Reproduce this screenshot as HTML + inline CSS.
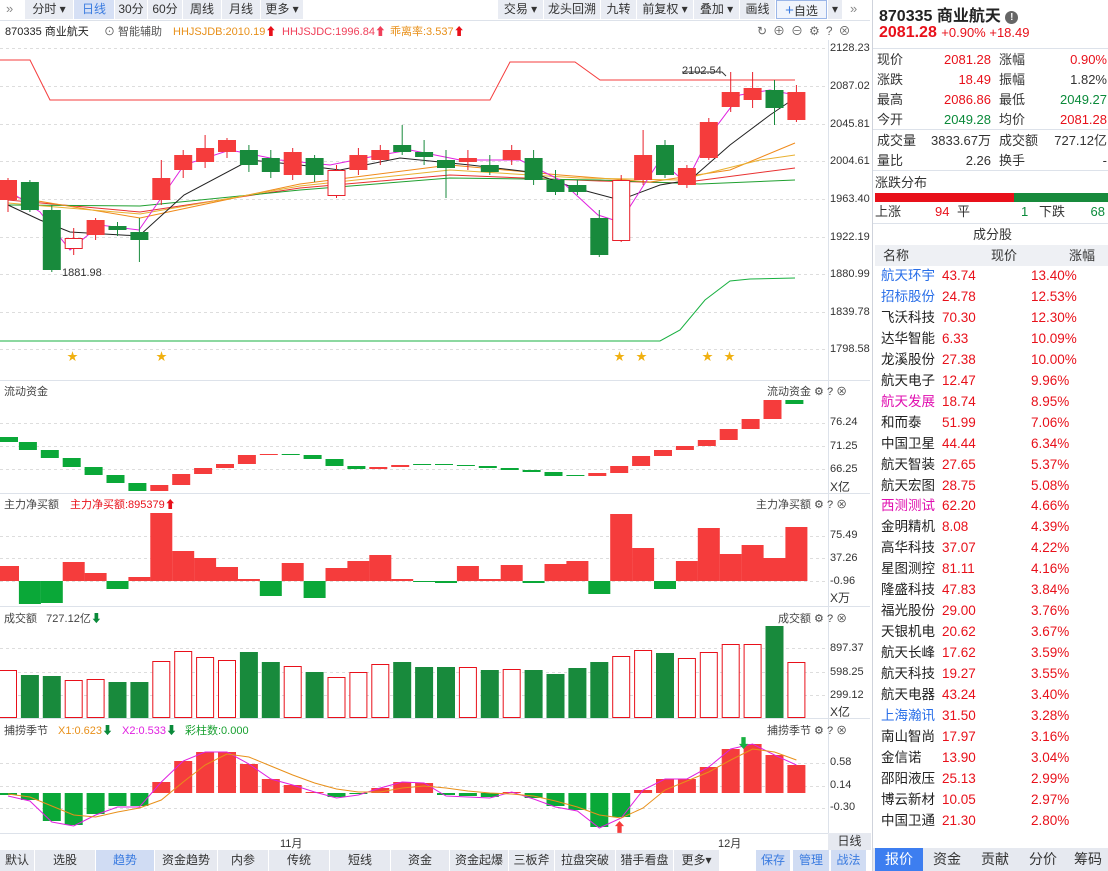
<!DOCTYPE html>
<html><head><meta charset="utf-8">
<style>
*{margin:0;padding:0;box-sizing:border-box}
body{width:1108px;height:871px;overflow:hidden;background:#fff;font-family:"Liberation Sans","Noto Sans CJK SC",sans-serif;font-size:12px;color:#333;position:relative}
.a{position:absolute;white-space:nowrap}
.tb{position:absolute;top:0;height:19px;background:#e9ecf3;font-size:12px;line-height:19px;text-align:center;color:#333}
.rp{position:absolute;left:872px;top:0;width:236px;height:871px;border-left:1px solid #cfd3dc}
.row{position:absolute;left:4px;width:232px;height:20px;font-size:13px;line-height:20px}
.r{color:#e8101a}.g{color:#0a8a3a}
.bt{position:absolute;top:850px;height:21px;line-height:21px;background:#e6e9f0;text-align:center;font-size:12px;color:#333}
.ax{position:absolute;left:830px;font-size:11px;color:#333}
</style></head><body>
<div class="a" style="left:6px;top:1px;color:#888;font-size:13px">»</div>
<div class="tb" style="left:25px;width:48px">分时 ▾</div>
<div class="tb" style="left:74px;width:40px;background:#d6e0f5;color:#3a7be0">日线</div>
<div class="tb" style="left:115px;width:32px">30分</div>
<div class="tb" style="left:148px;width:34px">60分</div>
<div class="tb" style="left:183px;width:38px">周线</div>
<div class="tb" style="left:222px;width:38px">月线</div>
<div class="tb" style="left:261px;width:42px">更多 ▾</div>
<div class="tb" style="left:498px;width:45px">交易 ▾</div>
<div class="tb" style="left:544px;width:56px">龙头回溯</div>
<div class="tb" style="left:601px;width:35px">九转</div>
<div class="tb" style="left:637px;width:56px">前复权 ▾</div>
<div class="tb" style="left:694px;width:45px">叠加 ▾</div>
<div class="tb" style="left:740px;width:35px">画线</div>
<div class="tb" style="left:776px;width:51px;border:1px solid #9bb6e8;background:#f0f4fc"><span style="color:#3a7be0;font-size:15px">+</span>自选</div>
<div class="tb" style="left:828px;width:14px">▾</div>
<div class="a" style="left:850px;top:1px;color:#888;font-size:13px">»</div>
<div class="a" style="left:0;top:20px;width:870px;height:1px;background:#dde2ea"></div>
<div class="a" style="left:5px;top:23px;font-size:11px;color:#222">870335 商业航天</div>
<div class="a" style="left:104px;top:23px;font-size:11px;color:#555">⊙ 智能辅助</div>
<div class="a" style="left:173px;top:23px;font-size:11px;color:#e8901a">HHJSJDB:2010.19<span class="r">⬆</span></div>
<div class="a" style="left:282px;top:23px;font-size:11px;color:#f0405a">HHJSJDC:1996.84⬆</div>
<div class="a" style="left:390px;top:23px;font-size:11px;color:#e8901a">乖离率:3.537<span class="r">⬆</span></div>
<div class="a" style="left:757px;top:22px;font-size:12px;color:#666;letter-spacing:6px">↻⊕⊖⚙?⊗</div>

<svg id="ch" class="a" style="left:0;top:0" width="870" height="850"></svg>

<div class="ax" style="top:42px">2128.23</div>
<div class="ax" style="top:80px">2087.02</div>
<div class="ax" style="top:118px">2045.81</div>
<div class="ax" style="top:155px">2004.61</div>
<div class="ax" style="top:193px">1963.40</div>
<div class="ax" style="top:231px">1922.19</div>
<div class="ax" style="top:268px">1880.99</div>
<div class="ax" style="top:306px">1839.78</div>
<div class="ax" style="top:343px">1798.58</div>
<div class="a" style="left:682px;top:65px;font-size:11px">2102.54</div>
<div class="a" style="left:62px;top:267px;font-size:11px">1881.98</div>

<div class="a" style="left:4px;top:383px;font-size:11px;color:#444">流动资金</div>
<div class="a" style="left:767px;top:383px;font-size:11px;color:#444">流动资金 ⚙ ? ⊗</div>
<div class="ax" style="top:416px">76.24</div>
<div class="ax" style="top:440px">71.25</div>
<div class="ax" style="top:463px">66.25</div>
<div class="ax" style="top:478px;font-size:12px">X亿</div>

<div class="a" style="left:4px;top:496px;font-size:11px;color:#444">主力净买额</div>
<div class="a" style="left:70px;top:496px;font-size:11px;color:#e8101a">主力净买额:895379⬆</div>
<div class="a" style="left:756px;top:496px;font-size:11px;color:#444">主力净买额 ⚙ ? ⊗</div>
<div class="ax" style="top:529px">75.49</div>
<div class="ax" style="top:552px">37.26</div>
<div class="ax" style="top:575px">-0.96</div>
<div class="ax" style="top:589px;font-size:12px">X万</div>

<div class="a" style="left:4px;top:610px;font-size:11px;color:#444">成交额 &nbsp; 727.12亿<span class="g">⬇</span></div>
<div class="a" style="left:778px;top:610px;font-size:11px;color:#444">成交额 ⚙ ? ⊗</div>
<div class="ax" style="top:642px">897.37</div>
<div class="ax" style="top:666px">598.25</div>
<div class="ax" style="top:689px">299.12</div>
<div class="ax" style="top:703px;font-size:12px">X亿</div>

<div class="a" style="left:4px;top:722px;font-size:11px;color:#444">捕捞季节</div>
<div class="a" style="left:58px;top:722px;font-size:11px;color:#e8901a">X1:0.623<span class="g">⬇</span></div>
<div class="a" style="left:122px;top:722px;font-size:11px;color:#e020e0">X2:0.533<span class="g">⬇</span></div>
<div class="a" style="left:185px;top:722px;font-size:11px;color:#18a030">彩柱数:0.000</div>
<div class="a" style="left:767px;top:722px;font-size:11px;color:#444">捕捞季节 ⚙ ? ⊗</div>
<div class="ax" style="top:756px">0.58</div>
<div class="ax" style="top:779px">0.14</div>
<div class="ax" style="top:801px">-0.30</div>

<div class="a" style="left:0;top:833px;width:828px;height:1px;background:#dde2ea"></div>
<div class="a" style="left:280px;top:835px;font-size:11px">11月</div>
<div class="a" style="left:718px;top:835px;font-size:11px">12月</div>
<div class="a" style="left:828px;top:833px;width:43px;height:17px;background:#e6e9f0;text-align:center;font-size:12px;line-height:17px">日线</div>

<div class="bt" style="left:0;width:34px">默认</div>
<div class="bt" style="left:35px;width:60px">选股</div>
<div class="bt" style="left:96px;width:58px;background:#d0dcf3;color:#3a7be0">趋势</div>
<div class="bt" style="left:155px;width:62px">资金趋势</div>
<div class="bt" style="left:218px;width:50px">内参</div>
<div class="bt" style="left:269px;width:60px">传统</div>
<div class="bt" style="left:330px;width:60px">短线</div>
<div class="bt" style="left:391px;width:58px">资金</div>
<div class="bt" style="left:450px;width:58px">资金起爆</div>
<div class="bt" style="left:509px;width:45px">三板斧</div>
<div class="bt" style="left:555px;width:60px">拉盘突破</div>
<div class="bt" style="left:616px;width:57px">猎手看盘</div>
<div class="bt" style="left:674px;width:45px">更多▾</div>
<div class="bt" style="left:756px;width:34px;background:#d0dcf3;color:#3a7be0">保存</div>
<div class="bt" style="left:793px;width:36px;background:#d0dcf3;color:#3a7be0">管理</div>
<div class="bt" style="left:831px;width:35px;background:#d0dcf3;color:#3a7be0">战法</div>

<div class="rp">
<div class="a" style="left:6px;top:2px;font-size:16px;font-weight:bold;color:#222">870335 商业航天 <span style="display:inline-block;width:13px;height:13px;border-radius:50%;background:#666;color:#fff;font-size:10px;text-align:center;line-height:13px;vertical-align:1px">!</span></div>
<div class="a" style="left:6px;top:24px;font-size:16px;font-weight:bold;color:#e8101a">2081.28 <span style="font-size:13px;font-weight:normal">+0.90% +18.49</span></div>
<div class="a" style="left:0;top:48px;width:236px;height:1px;background:#dde2ea"></div>
<div class="row" style="top:50px">现价<span class="a r" style="right:118px">2081.28</span><span class="a" style="left:122px">涨幅</span><span class="a r" style="right:2px">0.90%</span></div>
<div class="row" style="top:70px">涨跌<span class="a r" style="right:118px">18.49</span><span class="a" style="left:122px">振幅</span><span class="a" style="right:2px">1.82%</span></div>
<div class="row" style="top:90px">最高<span class="a r" style="right:118px">2086.86</span><span class="a" style="left:122px">最低</span><span class="a g" style="right:2px">2049.27</span></div>
<div class="row" style="top:110px">今开<span class="a g" style="right:118px">2049.28</span><span class="a" style="left:122px">均价</span><span class="a r" style="right:2px">2081.28</span></div>
<div class="a" style="left:0;top:129px;width:236px;height:1px;background:#dde2ea"></div>
<div class="row" style="top:131px">成交量<span class="a" style="right:118px">3833.67万</span><span class="a" style="left:122px">成交额</span><span class="a" style="right:2px">727.12亿</span></div>
<div class="row" style="top:151px">量比<span class="a" style="right:118px">2.26</span><span class="a" style="left:122px">换手</span><span class="a" style="right:2px">-</span></div>
<div class="a" style="left:0;top:170px;width:236px;height:1px;background:#dde2ea"></div>
<div class="row" style="top:173px;left:2px">涨跌分布</div>
<div class="a" style="left:2px;top:193px;width:139px;height:9px;background:#e8101a"></div>
<div class="a" style="left:141px;top:193px;width:95px;height:9px;background:#188a3c"></div>
<div class="row" style="top:202px;left:2px">上涨<span class="a r" style="left:60px">94</span><span class="a" style="left:82px">平</span><span class="a g" style="left:146px">1</span><span class="a" style="left:164px">下跌</span><span class="a g" style="right:2px">68</span></div>
<div class="a" style="left:0;top:223px;width:236px;height:1px;background:#dde2ea"></div>
<div class="a" style="left:100px;top:225px;font-size:13px;line-height:20px">成分股</div>
<div class="a" style="left:2px;top:245px;width:234px;height:21px;background:#eef0f4;font-size:13px;line-height:21px"><span class="a" style="left:8px">名称</span><span class="a" style="left:116px">现价</span><span class="a" style="left:194px">涨幅</span></div>
<div id="list"></div>
<div class="a" style="left:0;top:848px;width:236px;height:23px;background:#e6e9f0"></div>
<div class="a" style="left:2px;top:848px;width:48px;height:23px;background:#3d7ef0;color:#fff;font-size:14px;text-align:center;line-height:23px">报价</div>
<div class="a" style="left:50px;top:848px;width:48px;font-size:14px;text-align:center;line-height:23px">资金</div>
<div class="a" style="left:98px;top:848px;width:48px;font-size:14px;text-align:center;line-height:23px">贡献</div>
<div class="a" style="left:146px;top:848px;width:48px;font-size:14px;text-align:center;line-height:23px">分价</div>
<div class="a" style="left:194px;top:848px;width:42px;font-size:14px;text-align:center;line-height:23px">筹码</div>
</div>

<script>
var L=[["航天环宇","43.74","13.40%","#2a6fe8"],["招标股份","24.78","12.53%","#2a6fe8"],["飞沃科技","70.30","12.30%"],["达华智能","6.33","10.09%"],["龙溪股份","27.38","10.00%"],["航天电子","12.47","9.96%"],["航天发展","18.74","8.95%","#e010b0"],["和而泰","51.99","7.06%"],["中国卫星","44.44","6.34%"],["航天智装","27.65","5.37%"],["航天宏图","28.75","5.08%"],["西测测试","62.20","4.66%","#e010b0"],["金明精机","8.08","4.39%"],["高华科技","37.07","4.22%"],["星图测控","81.11","4.16%"],["隆盛科技","47.83","3.84%"],["福光股份","29.00","3.76%"],["天银机电","20.62","3.67%"],["航天长峰","17.62","3.59%"],["航天科技","19.27","3.55%"],["航天电器","43.24","3.40%"],["上海瀚讯","31.50","3.28%","#2a6fe8"],["南山智尚","17.97","3.16%"],["金信诺","13.90","3.04%"],["邵阳液压","25.13","2.99%"],["博云新材","10.05","2.97%"],["中国卫通","21.30","2.80%"]];
var h="";L.forEach(function(r,i){var y=266+i*20.95;h+='<div class="row" style="top:'+y+'px;left:8px;font-size:13.5px"><span style="color:'+(r[3]||"#222")+'">'+r[0]+'</span><span class="a r" style="left:61px">'+r[1]+'</span><span class="a r" style="left:150px">'+r[2]+'</span></div>';});
document.getElementById("list").innerHTML=h;

var s="",R="#f53c3c",G="#0aa838",GV="#188a3c";
function X(i){return 8+21.9*i}
function rect(x,y,w,hh,f,st){if(hh<1)hh=1;s+='<rect x="'+x+'" y="'+y+'" width="'+w+'" height="'+hh+'" fill="'+f+'"'+(st?' stroke="'+st+'"':'')+'/>'}
function line(x1,y1,x2,y2,c,d){s+='<line x1="'+x1+'" y1="'+y1+'" x2="'+x2+'" y2="'+y2+'" stroke="'+c+'"'+(d?' stroke-dasharray="3,3"':'')+'/>'}
function poly(p,c,w){s+='<polyline fill="none" stroke="'+c+'" stroke-width="'+(w||1)+'" points="'+p+'"/>'}
[48,86,124,161,199,237,274,312,349,423,446,469,536,558,581,648,672,695,763,786,808].forEach(function(y){line(0,y+0.5,828,y+0.5,"#ddd",1)});
[380,493,606,718].forEach(function(y){line(0,y+0.5,870,y+0.5,"#dde2ea")});
line(828.5,40,828.5,850,"#dde2ea");
poly("0,60 30,60 50,100 490,100 510,62 575,62 600,80 795,80",R);
poly("0,341 660,341 680,330 705,300 730,281 750,279 795,278","#18b040");
poly("8,200 140,212 300,188 450,175 600,181 680,183 795,168","#e83030");
poly("8,205 140,206 300,190 450,178 600,180 700,184 795,180","#20a030");
poly("8,196 140,218 300,184 450,165 560,175 650,182 730,170 795,143","#f08a1a");
poly("8,203 140,214 300,186 450,170 580,178 680,180 760,160 795,155","#e8b030");
poly("8,205 40,220 70,232 139,236 184,195 250,160 300,165 340,170 400,158 470,165 530,172 575,188 620,200 660,185 690,180 730,145 770,115 795,98","#222");
poly("8,190 40,212 70,250 100,225 139,230 184,165 230,150 280,160 330,165 380,155 410,150 460,160 520,160 560,180 598,215 620,222 660,160 686,183 710,135 740,95 770,90 795,95","#e020e0");
poly("682,72 722,72 726,76","#333");
var C=[[200,180,178,212,1],[182,210,180,212,0],[210,270,205,272,0],[248,238,228,255,1],[235,220,218,240,1],[226,230,222,236,0],[232,240,218,262,0],[200,178,160,205,1],[170,155,150,178,1],[162,148,135,168,1],[152,140,138,158,1],[150,165,145,172,0],[158,172,150,178,0],[175,152,148,180,1],[158,175,155,182,0],[195,170,165,198,1],[170,155,148,175,1],[160,150,145,165,1],[145,152,125,155,0],[152,157,140,165,0],[160,168,150,198,0],[162,158,150,170,1],[165,172,155,175,0],[160,150,145,165,1],[158,180,150,185,0],[180,192,170,195,0],[185,192,180,195,0],[218,255,210,257,0],[240,180,175,242,1],[180,155,130,185,1],[145,175,140,178,0],[185,168,165,188,1],[158,122,118,160,1],[107,92,72,112,1],[100,88,72,108,1],[90,108,80,125,0],[120,92,85,122,1]];
C.forEach(function(c,i){var x=X(i),t=Math.min(c[0],c[1]),b=Math.max(c[0],c[1]),col=c[4]?"#e8202a":GV;
line(x,c[2],x,t,col);line(x,b,x,c[3],col);
if(c[4]&&(i==3||i==15||i==28))rect(x-8.5,t+.5,17,b-t,"#fff",col);else rect(x-9,t,18,b-t,c[4]?"#f53c3c":GV);});
[72,161,619,641,707,729].forEach(function(x){s+='<text x="'+(x-5)+'" y="360" font-size="11" fill="#f0b010">★</text>'});
var F=[[437,442,0],[442,450,0],[450,458,0],[458,467,0],[467,475,0],[475,483,0],[483,491,0],[485,491,1],[474,485,1],[468,474,1],[464,468,1],[455,464,1],[454,455,1],[454,455,0],[455,459,0],[459,466,0],[466,469,0],[467,469,1],[465,467,1],[464,465,0],[464,465,0],[465,466,0],[466,468,0],[468,470,0],[470,472,0],[472,476,0],[475,476,0],[473,476,1],[466,473,1],[456,466,1],[450,456,1],[446,450,1],[440,446,1],[429,440,1],[419,429,1],[400,419,1],[400,404,0]];
F.forEach(function(f,i){rect(X(i)-11+((i==0)?3:0),f[0],18,f[1]-f[0],f[2]?R:G)});
var N=[566,604,603,562,573,589,577,513,551,558,567,579,596,563,598,568,561,555,579,582,583,566,579,565,583,564,561,594,514,548,589,561,528,554,545,558,527];
N.forEach(function(v,i){var z=581,x=X(i)-11;if(v<z)rect(x,v,22,z-v,R);else rect(x,z,22,v-z,G)});
var V=[670,675,676,680,679,682,682,661,651,657,660,652,662,666,672,677,672,664,662,667,667,667,670,669,670,674,668,662,656,650,653,658,652,644,644,626,662];
var VC=[1,0,0,1,1,0,0,1,1,1,1,0,0,1,0,1,1,1,0,0,0,1,0,1,0,0,0,0,1,1,0,1,1,1,1,0,1];
V.forEach(function(v,i){var x=X(i)-9;if(VC[i])rect(x+.5,v+.5,17,717-v,"#fff","#e8101a");else rect(x,v,18,718-v,GV)});
var S=[795,800,821,825,814,806,806,782,761,752,752,764,779,785,792,797,794,788,782,783,795,796,797,792,798,806,810,827,817,790,779,779,767,749,744,755,765];
S.forEach(function(v,i){var z=793,x=X(i)-9;if(v<z)rect(x,v,18,z-v,R);else rect(x,z,18,v-z,G)});
var mp="",op="";S.forEach(function(v,i){mp+=X(i)+","+(v<793?v:v+1)+" "});
var O=[794,797,806,815,817,812,808,800,782,765,754,757,766,775,783,789,792,792,788,786,788,791,793,794,796,801,807,815,818,808,790,781,772,760,749,752,760];
O.forEach(function(v,i){op+=X(i)+","+v+" "});
poly(mp,"#e020e0");poly(op,"#e8901a");
s+='<text x="737" y="748" font-size="13" fill="#18b040">⬇</text><text x="613" y="832" font-size="13" fill="#f53c3c">⬆</text>';
document.getElementById("ch").innerHTML=s;
</script>
</body></html>
